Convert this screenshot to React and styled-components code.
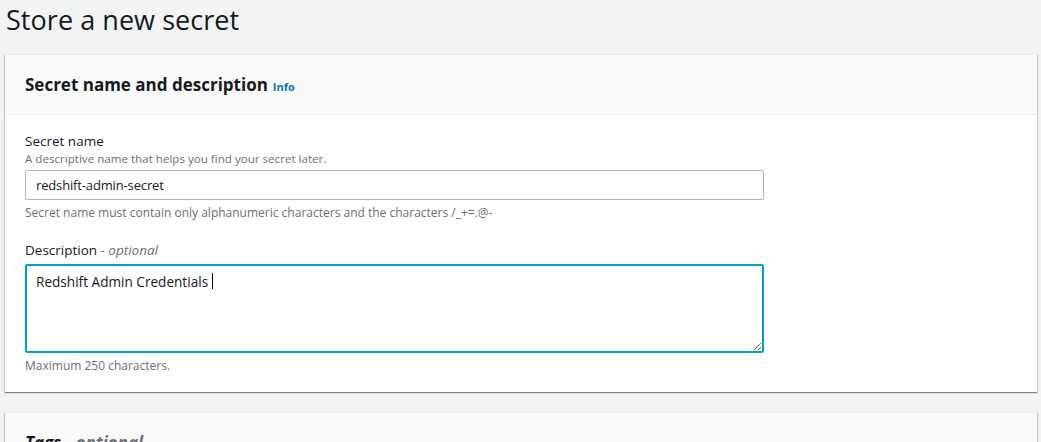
import React from 'react';
import styled, { createGlobalStyle } from 'styled-components';

const GlobalStyle = createGlobalStyle`
  html, body {
    margin: 0;
    padding: 0;
    background: #f2f3f3;
    font-family: "Open Sans", "Noto Sans", Arial, sans-serif;
    color: #16191f;
    overflow: hidden;
  }
`;

const Page = styled.div`
  padding: 0 4px 0 5px;
`;

const PageTitle = styled.h1`
  margin: 0;
  padding: 0 0 0 1px;
  height: 54px;
  font-size: 27px;
  font-weight: 400;
  line-height: 40px;
  letter-spacing: 0.05px;
  color: #16191f;
`;

const Stack = styled.div`
  display: flex;
  flex-direction: column;
  gap: 20px;
`;

const Card = styled.section`
  background: #fff;
  border-top: 1px solid #eaeded;
  box-shadow: 0 1px 1px 0 rgba(0, 28, 36, 0.3), 1px 1px 1px 0 rgba(0, 28, 36, 0.15),
    -1px 1px 1px 0 rgba(0, 28, 36, 0.15);
`;

const CardHeader = styled.header`
  background: #fafafa;
  border-bottom: 1px solid #eaeded;
  padding: 18px 20px 17px;
  display: flex;
  align-items: baseline;
  gap: 5px;
`;

const CardTitle = styled.h2`
  margin: 0;
  font-size: 17px;
  font-weight: 700;
  line-height: 24px;
  font-style: ${(p) => (p.$italic ? 'italic' : 'normal')};
`;

const InfoLink = styled.a`
  font-size: 11px;
  font-weight: 700;
  color: #0073bb;
  text-decoration: none;
`;

const CardBody = styled.div`
  padding: 16px 20px 18px;
  display: flex;
  flex-direction: column;
  gap: 19px;
`;

const Field = styled.div`
  display: flex;
  flex-direction: column;
`;

const Label = styled.label`
  font-size: 13.5px;
  line-height: 20px;
  color: #16191f;
  margin-bottom: ${(p) => (p.$gap ? '4px' : '0')};
`;

const Optional = styled.i`
  color: #687078;
`;

const Description = styled.div`
  font-size: 11.6px;
  line-height: 16px;
  color: #687078;
  margin-bottom: 3px;
`;

const Constraint = styled.div`
  font-size: 12px;
  line-height: 16px;
  color: #687078;
  margin-top: 5px;
`;

const TextInput = styled.input`
  box-sizing: border-box;
  width: 739px;
  height: 30px;
  padding: 0 10px;
  border: 1px solid #aab7b8;
  border-radius: 2px;
  font-family: inherit;
  font-size: 13px;
  letter-spacing: -0.15px;
  color: #16191f;
  outline: none;
`;

const AreaWrap = styled.div`
  position: relative;
  width: 739px;
`;

const TextArea = styled.textarea`
  box-sizing: border-box;
  width: 739px;
  height: 89px;
  padding: 4px 9px;
  border: 2px solid #00a1c9;
  border-radius: 2px;
  font-family: inherit;
  font-size: 13.6px;
  line-height: 24px;
  color: #16191f;
  outline: none;
  resize: both;
  display: block;
  caret-color: transparent;
`;

/* static text caret, drawn over the focused textarea */
const Caret = styled.span`
  position: absolute;
  left: 187px;
  top: 9px;
  width: 1px;
  height: 16px;
  background: #000;
  pointer-events: none;
`;

export default function App() {
  return (
    <Page>
      <GlobalStyle />
      <PageTitle>Store a new secret</PageTitle>
      <Stack>
        <Card>
          <CardHeader>
            <CardTitle>Secret name and description</CardTitle>
            <InfoLink href="#">Info</InfoLink>
          </CardHeader>
          <CardBody>
            <Field>
              <Label>Secret name</Label>
              <Description>A descriptive name that helps you find your secret later.</Description>
              <TextInput defaultValue="redshift-admin-secret" />
              <Constraint>
                Secret name must contain only alphanumeric characters and the characters /_+=.@-
              </Constraint>
            </Field>
            <Field>
              <Label $gap>
                Description <Optional>- optional</Optional>
              </Label>
              <AreaWrap>
                <TextArea defaultValue="Redshift Admin Credentials " />
                <Caret />
              </AreaWrap>
              <Constraint>Maximum 250 characters.</Constraint>
            </Field>
          </CardBody>
        </Card>
        <Card>
          <CardHeader>
            <CardTitle $italic>
              Tags <Optional>- optional</Optional>
            </CardTitle>
          </CardHeader>
        </Card>
      </Stack>
    </Page>
  );
}
